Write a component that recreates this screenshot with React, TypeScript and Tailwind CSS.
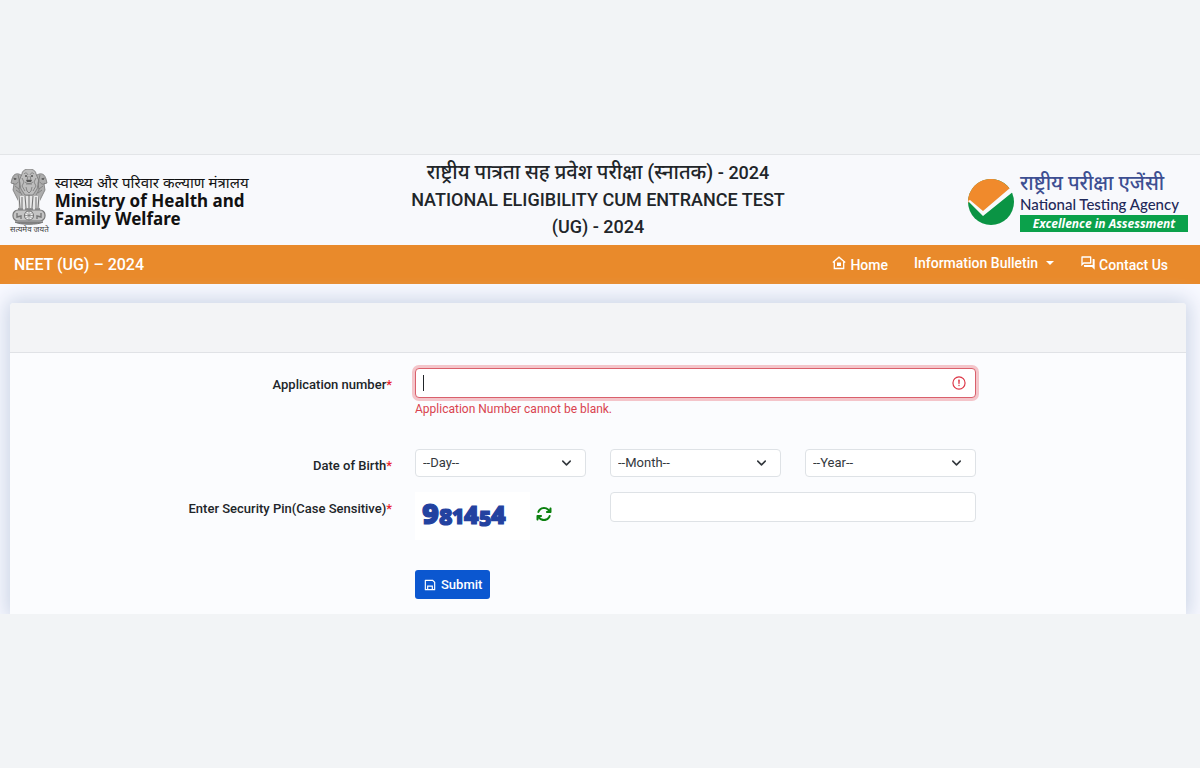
import { useState } from 'react';
import type { ReactNode } from 'react';
import { ChevronDown } from 'lucide-react';
import { FaArrowsRotate } from 'react-icons/fa6';
import { MdOutlineForum } from 'react-icons/md';
import { RiSaveLine } from 'react-icons/ri';

const DAYS = Array.from({ length: 31 }, (_, i) => String(i + 1));
const MONTHS = Array.from({ length: 12 }, (_, i) => String(i + 1));
const YEARS = Array.from({ length: 40 }, (_, i) => String(2010 - i));

function Emblem() {
  return (
    <svg viewBox="0 0 38 56" className="h-14 w-[38px]" fill="none" stroke="#777" aria-hidden="true">
      {/* lions */}
      <g fill="#adadad" strokeWidth="0.8">
        <path d="M11 6C6 3 3 6 2 10l-1 4 3 1-1 6 3 6 3 6h20l3-6 3-6-1-6 3-1-1-4c-1-4-4-7-9-4z" />
        <path d="M12 5c0-3 3-5 7-5s7 2 7 5l3 7-2 8-4 6h-8l-4-6-2-8z" fill="#bdbdbd" />
      </g>
      <g strokeWidth="0.8">
        <path d="M14 5c2-2 3-1 4 1M24 5c-2-2-3-1-4 1M18 7l-1 4h4l-1-4M15 13c2 2 6 2 8 0M16 15h6M12 9l2 4-2 4 3 5M26 9l-2 4 2 4-3 5M16 18l1 4 2 2 2-2 1-4" />
        <path d="M3 9l4 1M3 14c2 2 4 1 5-1M35 9l-4 1M35 14c-2 2-4 1-5-1M5 17l4 3M33 17l-4 3M6 21l4 3M32 21l-4 3M8 6l2 8-1 7 3 5M30 6l-2 8 1 7-3 5" />
      </g>
      <g fill="#555" stroke="none">
        <circle cx="16" cy="7" r="1" />
        <circle cx="22" cy="7" r="1" />
        <circle cx="5" cy="10" r="1" />
        <circle cx="33" cy="10" r="1" />
        <path d="M16 11h6l-1 2h-4z" />
      </g>
      {/* legs */}
      <path d="M8 27h22v13H8z" fill="#e6e6e6" stroke="none" />
      <path d="M9 27l1 12M12 28v11M15 27l1 12M19 26v13M23 27l-1 12M26 28v11M29 27l-1 12" strokeWidth="1.1" />
      <path d="M8 40h5M15 40h8M25 40h5" strokeWidth="1.6" />
      {/* abacus with the wheel */}
      <rect x="3" y="41" width="32" height="11" rx="5" fill="#c4c4c4" strokeWidth="1.2" />
      <circle cx="19" cy="46.500" r="4.500" fill="#eee" strokeWidth="1.2" />
      <path d="M19 42v9M14.500 46.500h9M16 43.500l6 6M22 43.500l-6 6" strokeWidth="0.7" />
      <path d="M7 44v4l4-1v3M31 44v4l-4-1v3" strokeWidth="1.4" />
      <path d="M5 53c4 3 24 3 28 0z" fill="#888" strokeWidth="1" />
    </svg>
  );
}

function AgencyMark() {
  return (
    <svg viewBox="0 0 46 46" className="size-[46px]" aria-hidden="true">
      <circle cx="23" cy="23" r="23" fill="#0a9444" />
      <path d="M0 24A23 23 0 0 1 42 10L15 33 2 22z" fill="#f08a2c" />
      <path d="M0 22l15 15L46 12 42 9 15 32 2 21z" fill="#f8f9fb" />
    </svg>
  );
}

function HomeIcon() {
  return (
    <svg viewBox="0 0 14 14" className="mb-1 size-3.5" fill="none" stroke="currentColor" strokeWidth="1.300" aria-hidden="true">
      <path d="M.8 6.500L7 1.200l6.200 5.300M2.300 5.500v7h9.400v-7" />
      <rect x="5" y="6.500" width="4" height="3.500" fill="currentColor" stroke="none" />
    </svg>
  );
}

function InvalidIcon() {
  return (
    <svg viewBox="0 0 12 12" className="size-3.5" fill="none" stroke="#dc3545" aria-hidden="true">
      <circle cx="6" cy="6" r="5.200" />
      <path strokeLinejoin="round" d="M5.800 3.600h.4L6 6.500z" />
      <circle cx="6" cy="8.200" r=".6" fill="#dc3545" stroke="none" />
    </svg>
  );
}

function Captcha() {
  return (
    <svg
      viewBox="0 0 115 48"
      className="h-12 w-[115px] bg-white"
      fill="#2342a0"
      stroke="#2342a0"
      strokeWidth="1.200"
      fontFamily="'Open Sans', sans-serif"
      fontWeight="800"
    >
      <text x="7" y="32" fontSize="29">9</text>
      <text x="24" y="33" fontSize="23">8</text>
      <text x="37" y="32" fontSize="21">1</text>
      <text x="49" y="32" fontSize="25">4</text>
      <text x="64" y="34" fontSize="21">5</text>
      <text x="76" y="32" fontSize="25">4</text>
    </svg>
  );
}

function FieldLabel({ htmlFor, children }: { htmlFor: string; children: ReactNode }) {
  return (
    <label
      htmlFor={htmlFor}
      className="col-span-4 px-[11px] pt-[7px] text-right text-[13px] leading-5 font-medium"
    >
      {children}
      <span className="text-[#e8232f]">*</span>
    </label>
  );
}

interface DateSelectProps {
  id: string;
  placeholder: string;
  options: string[];
}

function DateSelect({ id, placeholder, options }: DateSelectProps) {
  return (
    <div className="col-span-2 px-3 pb-[15px]">
      <div className="relative">
        <select
          id={id}
          aria-label={id}
          defaultValue=""
          className="block h-7 w-full appearance-none rounded border border-[#dee2e6] bg-white px-[7px] text-[13px] leading-5 text-[#33383d]"
        >
          <option value="">{placeholder}</option>
          {options.map((o) => (
            <option key={o}>{o}</option>
          ))}
        </select>
        <ChevronDown
          size={15}
          strokeWidth={2.5}
          className="pointer-events-none absolute top-1/2 right-3 -translate-y-1/2 text-[#33383d]"
        />
      </div>
    </div>
  );
}

export default function App() {
  const [appNo, setAppNo] = useState('');
  const [pin, setPin] = useState('');

  return (
    <div className="flex min-h-screen flex-col justify-center bg-[#f2f4f6] font-[Roboto,'Noto_Sans',sans-serif] text-[#212529]">
      <div className="overflow-hidden border-t border-[#e3e5e8] bg-[#f8f9fc]">
        <header className="grid grid-cols-3 items-center pr-1">
          <div className="flex items-center gap-1.5 pt-1 pl-2.5">
            <div className="flex flex-col items-center">
              <Emblem />
              <span className="text-[8px] leading-[10px] text-[#444]">सत्यमेव जयते</span>
            </div>
            <div className="font-['Noto_Sans',sans-serif] text-[#111]">
              <p className="mb-px text-[15px] leading-[18px] whitespace-nowrap">स्वास्थ्य और परिवार कल्याण मंत्रालय</p>
              <p className="pb-1 text-[17px] leading-[18px] font-bold">
                Ministry of Health and
                <br />
                Family Welfare
              </p>
            </div>
          </div>
          <h1 className="pt-1 pb-[5px] text-center text-lg leading-[27px] font-medium">
            <span className="text-xl leading-[27px] whitespace-nowrap">राष्ट्रीय पात्रता सह प्रवेश परीक्षा (स्नातक)</span> - 2024
            <br />
            NATIONAL ELIGIBILITY CUM ENTRANCE TEST (UG) - 2024
          </h1>
          <div className="flex items-center justify-end gap-1.5 pt-1 pr-2">
            <AgencyMark />
            <div className="w-[168px] whitespace-nowrap text-[#1f2a5a]">
              <p className="text-xl leading-5 font-medium text-[#3d4f92]">राष्ट्रीय परीक्षा एजेंसी</p>
              <p className="font-[Lato,sans-serif] text-[15px] leading-[22px] font-medium">National Testing Agency</p>
              <p className="bg-[#0ba14b] text-center font-['Open_Sans',sans-serif] text-xs leading-[17px] font-bold text-white italic">
                Excellence in Assessment
              </p>
            </div>
          </div>
        </header>

        <nav className="flex h-[39px] items-center justify-between bg-[#e98a2b] pr-8 pl-3.5 font-medium text-white">
          <a href="#" className="text-base">NEET (UG) – 2024</a>
          <div className="flex items-center gap-[26px] text-sm leading-5">
            <a href="#home" className="flex items-center gap-1">
              <HomeIcon />
              Home
            </a>
            <a href="#bulletin" className="mb-1 flex items-center gap-2">
              Information Bulletin
              <span className="border-x-4 border-t-4 border-x-transparent border-t-white" />
            </a>
            <a href="#contact" className="flex items-center gap-[3px]">
              <MdOutlineForum size={16} className="mb-1" />
              Contact Us
            </a>
          </div>
        </nav>

        <main className="bg-[#f8f9ff] pt-[19px] pr-3.5 pl-2.5">
          <div className="rounded-t bg-[#fbfcfe] shadow-[0_0_20px_4px_#ccd5e6]">
            <div className="h-[50px] rounded-t border-b border-[#e0e2e6] bg-[#f3f4f6]" />
            <form
              className="grid grid-cols-12 px-[3px] pt-[15px] pb-[15px]"
              onSubmit={(e) => e.preventDefault()}
            >
              <FieldLabel htmlFor="appno">Application number</FieldLabel>
              <div className="col-span-6 mb-8 px-3">
                <div className="relative">
                  <input
                    id="appno"
                    type="text"
                    value={appNo}
                    onChange={(e) => setAppNo(e.target.value)}
                    aria-invalid="true"
                    aria-describedby="appno-error"
                    className="block h-[30px] w-full rounded border border-[#d9606c] bg-white px-2 text-[13px] caret-transparent shadow-[0_0_0_3px_#f4c5ca] outline-none"
                  />
                  {appNo === '' && (
                    <span className="pointer-events-none absolute top-[7px] left-2 h-4 w-px bg-[#212529]" />
                  )}
                  <span className="pointer-events-none absolute top-2 right-2.5">
                    <InvalidIcon />
                  </span>
                </div>
                <p id="appno-error" className="mt-[3px] text-xs leading-4 text-[#d9434f]">
                  Application Number cannot be blank.
                </p>
              </div>

              <div className="col-span-2" />
              <FieldLabel htmlFor="day">Date of Birth</FieldLabel>
              <DateSelect id="day" placeholder="--Day--" options={DAYS} />
              <DateSelect id="month" placeholder="--Month--" options={MONTHS} />
              <DateSelect id="year" placeholder="--Year--" options={YEARS} />
              <div className="col-span-2" />

              <FieldLabel htmlFor="pin">Enter Security Pin(Case Sensitive)</FieldLabel>
              <div className="col-span-2 flex items-center gap-1.5 pl-3">
                <Captcha />
                <button type="button" aria-label="Refresh security pin" className="mb-1 text-[#0b800f]">
                  <FaArrowsRotate size={16} />
                </button>
              </div>
              <div className="col-span-4 px-3">
                <input
                  id="pin"
                  type="text"
                  value={pin}
                  onChange={(e) => setPin(e.target.value)}
                  className="block h-[30px] w-full rounded border border-[#dee2e6] bg-white px-2 text-[13px] outline-none"
                />
              </div>

              <div className="col-span-6 col-start-5 mt-[30px] px-3">
                <button
                  type="submit"
                  className="flex h-[29px] items-center gap-1 rounded-[3px] bg-[#0b57d0] px-2 text-[13px] font-medium text-white"
                >
                  <RiSaveLine size={14} />
                  Submit
                </button>
              </div>
            </form>
          </div>
        </main>
      </div>
    </div>
  );
}
